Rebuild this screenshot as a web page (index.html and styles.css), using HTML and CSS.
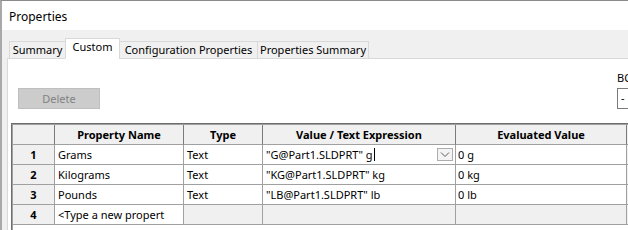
FILE: index.html
```html
<!DOCTYPE html>
<html>
<head>
<meta charset="utf-8">
<link rel="stylesheet" href="styles.css">
</head>
<body>
<div class="window">
  <div class="titlebar">Properties</div>
  <div class="content">
    <div class="tabs">
      <div class="tab w-summary">Summary</div>
      <div class="tab active w-custom">Custom</div>
      <div class="tab w-config">Configuration Properties</div>
      <div class="tab w-psum">Properties Summary</div>
    </div>
    <div class="panel">
      <div class="toolbar">
        <button class="btn-delete">Delete</button>
        <div class="bom">
          <div class="bom-label">BOM quantity:</div>
          <div class="bom-box">-</div>
        </div>
      </div>
      <div class="grid-outer">
        <div class="grid-inner">
          <div class="table">
            <div class="c h"></div>
            <div class="c h">Property Name</div>
            <div class="c h">Type</div>
            <div class="c h">Value / Text Expression</div>
            <div class="c h">Evaluated Value</div>
            <div class="c h last"></div>

            <div class="c n">1</div>
            <div class="c t">Grams</div>
            <div class="c t">Text</div>
            <div class="c t edit"><span class="val">"G@Part1.SLDPRT" g<span class="caret"></span></span><span class="dd"><svg width="14" height="11" viewBox="0 0 14 11"><polyline points="3,3.5 7,7.5 11,3.5" fill="none" stroke="#5a5a5a" stroke-width="1"/></svg></span></div>
            <div class="c t ev">0 g</div>
            <div class="c g last"></div>

            <div class="c n">2</div>
            <div class="c t">Kilograms</div>
            <div class="c t">Text</div>
            <div class="c t">"KG@Part1.SLDPRT" kg</div>
            <div class="c t ev">0 kg</div>
            <div class="c g last"></div>

            <div class="c n">3</div>
            <div class="c t">Pounds</div>
            <div class="c t">Text</div>
            <div class="c t">"LB@Part1.SLDPRT" lb</div>
            <div class="c t ev">0 lb</div>
            <div class="c g last"></div>

            <div class="c n">4</div>
            <div class="c t">&lt;Type a new propert</div>
            <div class="c g"></div>
            <div class="c g"></div>
            <div class="c g"></div>
            <div class="c g last"></div>
          </div>
        </div>
      </div>
    </div>
  </div>
</div>
</body>
</html>
```
FILE: styles.css
```css
html, body {
  margin: 0;
  padding: 0;
}
body {
  width: 628px;
  height: 230px;
  overflow: hidden;
  font-family: "Noto Sans", "Open Sans", sans-serif;
  font-size: 11px;
  color: #000;
  background: #f0f0f0;
}
.window {
  width: 760px;
  height: 230px;
  box-sizing: border-box;
  border-top: 1px solid #8a8a8a;
  border-left: 2px solid #a9a9a9;
  display: flex;
  flex-direction: column;
  background: #f0f0f0;
}
.titlebar {
  height: 29px;
  background: #fff;
  padding-left: 7px;
  display: flex;
  align-items: center;
  font-size: 12px;
  padding-top: 1px;
  box-sizing: border-box;
}
.content {
  flex: 1;
  padding: 8px 0 0 5px;
  display: flex;
  flex-direction: column;
}
.tabs {
  display: flex;
  align-items: flex-end;
  height: 21px;
  margin-left: 2px;
  margin-bottom: -1px;
  position: relative;
  z-index: 1;
}
.tab {
  height: 18px;
  box-sizing: border-box;
  border: 1px solid #d9d9d9;
  background: #f0f0f0;
  display: flex;
  align-items: center;
  justify-content: center;
  padding-bottom: 1px;
  margin-left: -1px;
}
.tab:first-child { margin-left: 0; }
.tab.active {
  height: 21px;
  background: #fff;
  border-bottom-color: #fff;
  padding-bottom: 4px;
}
.w-summary { width: 57px; }
.w-custom { width: 55px; }
.w-config { width: 139px; }
.w-psum { width: 112px; }
.panel {
  flex: 1;
  background: #fff;
  border-top: 1px solid #d9d9d9;
  border-left: 1px solid #d9d9d9;
  display: flex;
  flex-direction: column;
}
.toolbar {
  display: flex;
  align-items: flex-end;
  padding: 11px 0 0 10px;
}
.btn-delete {
  width: 82px;
  height: 21px;
  box-sizing: border-box;
  background: #cccccc;
  border: 1px solid #bfbfbf;
  color: #838383;
  font-family: inherit;
  font-size: 11px;
  padding: 0;
  margin: 0;
}
.bom {
  margin-left: 517px;
  display: flex;
  flex-direction: column;
}
.bom-label {
  height: 15px;
  line-height: 15px;
  margin-bottom: 3px;
}
.bom-box {
  width: 100px;
  height: 21px;
  box-sizing: border-box;
  border: 1px solid #7a7a7a;
  padding-left: 3px;
  line-height: 18px;
}
.grid-outer {
  margin: 14px 0 0 3px;
  flex: 1;
  border-top: 1px solid #6d6d6d;
  border-left: 1px solid #6d6d6d;
}
.grid-inner {
  height: 100%;
  border-top: 1px solid #a0a0a0;
  border-left: 1px solid #a0a0a0;
  background: #fff;
}
.table {
  display: grid;
  grid-template-columns: 42px 129px 79px 193px 171px 100px;
  grid-auto-rows: 20px;
}
.c {
  box-sizing: border-box;
  border-right: 1px solid #a0a0a0;
  border-bottom: 1px solid #a0a0a0;
  display: flex;
  align-items: center;
  white-space: nowrap;
  overflow: hidden;
}
.h {
  background: #f0f0f0;
  font-weight: bold;
  justify-content: center;
  border-right-color: #7a7a7a;
}
.h.last { border-right-color: #3a3a3a; }
.n {
  background: #f0f0f0;
  font-weight: bold;
  justify-content: center;
}
.t {
  background: #fff;
  padding-left: 3px;
}
.ev { padding-left: 2px; }
.g { background: #f0f0f0; }
.last { background: #f0f0f0; }
.edit {
  justify-content: space-between;
  padding-right: 2px;
}
.val {
  display: flex;
  align-items: center;
}
.caret {
  display: inline-block;
  width: 1px;
  height: 13px;
  background: #000;
  margin-left: 1px;
}
.dd {
  width: 16px;
  height: 13px;
  box-sizing: border-box;
  border: 1px solid #adadad;
  background: #f4f4f4;
  display: flex;
  align-items: center;
  justify-content: center;
}
.dd svg { display: block; }
```
